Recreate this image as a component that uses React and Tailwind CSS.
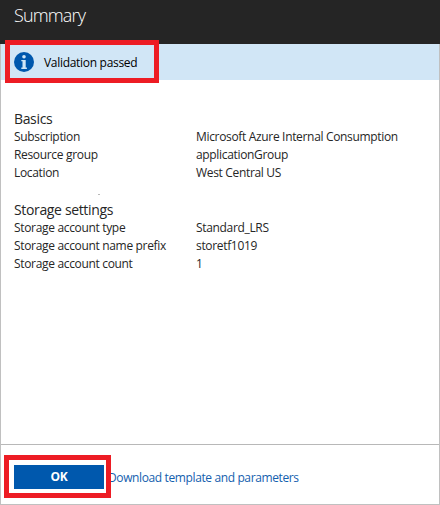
const basics = [
  { label: 'Subscription', value: 'Microsoft Azure Internal Consumption' },
  { label: 'Resource group', value: 'applicationGroup' },
  { label: 'Location', value: 'West Central US' },
];

const storage = [
  { label: 'Storage account type', value: 'Standard_LRS' },
  { label: 'Storage account name prefix', value: 'storetf1019' },
  { label: 'Storage account count', value: '1' },
];

function InfoIcon() {
  return (
    <svg className="size-5 shrink-0" viewBox="0 0 20 20" aria-hidden="true">
      <circle cx="10" cy="10" r="10" fill="#0058ad" />
      <circle cx="10" cy="4.8" r="1.8" fill="#d1e6f6" />
      <path d="M7.3 8h4.4v7.6h1.2V17H7.3v-1.4h1.2V9.2H7.3z" fill="#d1e6f6" />
    </svg>
  );
}

function Section({ title, rows }) {
  return (
    <section>
      <h2 className="h-[19px] text-[14px] leading-[19px] tracking-[-0.35px]">{title}</h2>
      <dl>
        {rows.map((row) => (
          <div key={row.label} className="flex h-[18px] text-[12px] leading-[18px] tracking-[-0.33px]">
            <dt className="w-[182px] shrink-0">{row.label}</dt>
            <dd className="whitespace-nowrap">{row.value}</dd>
          </div>
        ))}
      </dl>
    </section>
  );
}

export default function App() {
  return (
    <div className="relative flex h-[505px] w-[440px] flex-col overflow-hidden bg-white font-['Open_Sans','Noto_Sans',sans-serif] text-[#262626]">
      <header className="h-11 shrink-0 bg-[#252525] pl-[14px]">
        <h1 className="pt-[3px] text-[18px] leading-6 font-light tracking-[-0.85px] text-white">Summary</h1>
      </header>
      <div className="flex flex-1 flex-col border-x border-b border-[#c0c0c0]">
        <div className="flex h-9 items-center gap-[10px] bg-[#d1e6f6] pl-[13px] text-[12px] tracking-[-0.3px] text-black">
          <InfoIcon />
          <span className="pt-px">Validation passed</span>
        </div>
        <main className="flex flex-1 flex-col pt-[29px] pl-[13px]">
          <Section title="Basics" rows={basics} />
          <div className="h-[18px] pt-[12px] pl-[84px]">
            <div className="h-px w-0.5 bg-[#b8b8b8]" />
          </div>
          <Section title="Storage settings" rows={storage} />
        </main>
        <footer className="flex h-[60px] shrink-0 items-start border-t border-[#b8b8b8] pt-5 pl-[13px]">
          <button className="h-6 w-[90px] bg-[#0058ad] text-[12px] font-bold tracking-[-0.3px] text-white">OK</button>
          <a className="ml-1 pt-1 text-[12px] leading-[18px] tracking-[-0.38px] whitespace-nowrap text-[#1460ae]">Download template and parameters</a>
        </footer>
      </div>
      <div className="absolute top-10 left-[5px] h-[43px] w-[154px] border-5 border-[#ed1c24]" />
      <div className="absolute top-[455px] left-1 h-[43px] w-[107px] border-5 border-[#ed1c24]" />
    </div>
  );
}
